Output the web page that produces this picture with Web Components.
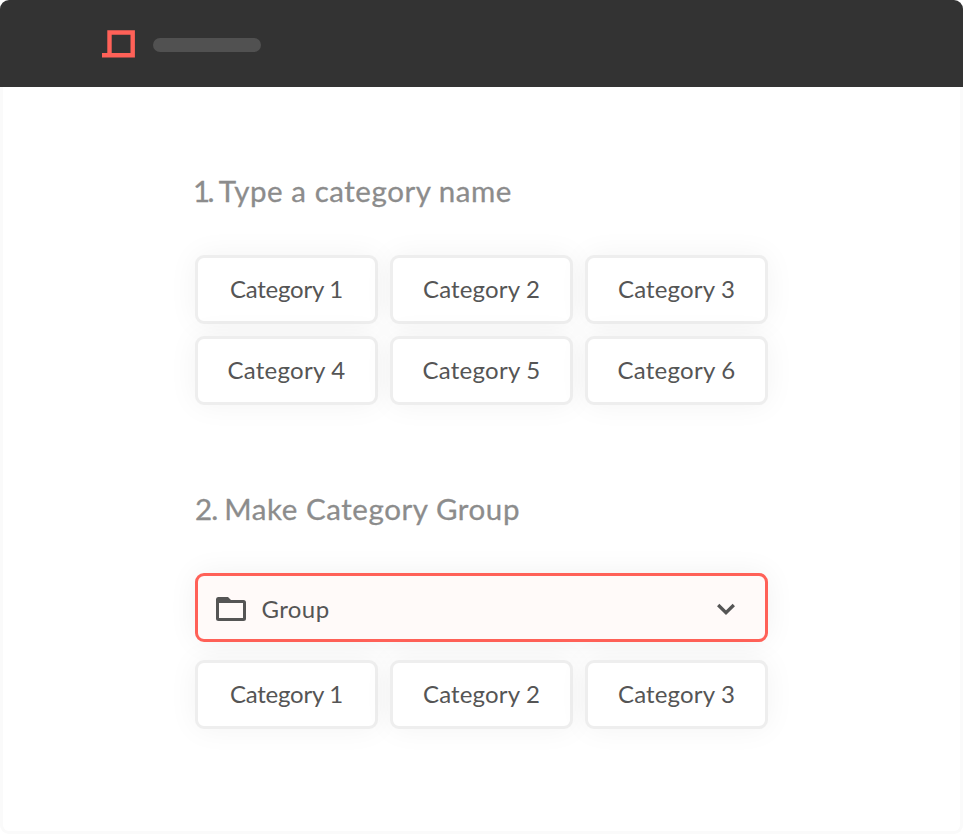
<!DOCTYPE html>
<html lang="en">
<head>
<meta charset="utf-8">
<title>Category groups</title>
<style>
html,body{margin:0;height:100%;background:#fff}
body{font-family:Lato,"Liberation Sans",sans-serif;color:#555}
</style>
</head>
<body>
<category-page></category-page>
<script>
function define(name, html) {
  const t = document.createElement('template');
  t.innerHTML = html;
  customElements.define(name, class extends HTMLElement {
    constructor() {
      super();
      this.attachShadow({mode: 'open'}).append(t.content.cloneNode(true));
    }
  });
}

/* A line of text whose tracking is adjusted to reach the given width. */
customElements.define('tracked-text', class extends HTMLElement {
  constructor() {
    super();
    this.attachShadow({mode: 'open'}).innerHTML =
      '<style>:host{display:block;white-space:pre}span{display:inline-block}</style><span><slot></slot></span>';
  }
  connectedCallback() {
    const span = this.shadowRoot.querySelector('span');
    const lead = this.querySelector('span');
    const n = this.textContent.length - (lead ? lead.textContent.length : 0);
    const gap = (Number(this.getAttribute('width')) - span.getBoundingClientRect().width) / n;
    span.style.letterSpacing = gap.toFixed(3) + 'px';
  }
});

define('app-bar', `
<style>
:host{display:flex;align-items:center;box-sizing:border-box;height:87px;padding:2px 0 0 102px;background:#333;border-radius:9px 9px 0 0}
svg{display:block;width:34px;height:29px;margin-right:17.300px}
i{width:108px;height:14px;border-radius:7px;background:#515151}
</style>
<svg viewBox="0 0 34 29"><path d="M7.500 25.300V2.500h23.200v22.800H0" fill="none" stroke="#ff6158" stroke-width="4.400"/></svg><i></i>`);

define('section-title', `
<style>:host{display:block;height:40px;font-size:29.5px;line-height:37px;color:#8c8c8c;-webkit-text-stroke:.3px #8c8c8c}</style>
<slot></slot>`);

define('category-card', `
<style>
:host{display:flex;align-items:center;justify-content:center;box-sizing:border-box;height:69px;padding-bottom:2px;border:3px solid #eee;border-radius:9px;background:#fff;background-clip:padding-box;font-size:24px;line-height:30px;color:#555}
</style>
<slot></slot>`);

define('card-grid', `
<style>
:host{display:grid;grid-template-columns:repeat(3,183px);gap:12px}
::slotted(*){box-shadow:0 0 30px rgba(0,0,0,.05)}
</style>
<slot></slot>`);

define('group-select', `
<style>
:host{display:flex;align-items:center;box-sizing:border-box;height:69px;padding:1px 27px 0 18px;border:3px solid #ff6158;border-radius:9px;background:#fffaf9;box-shadow:0 0 30px rgba(0,0,0,.06);font-size:24px;line-height:30px;color:#555}
svg{display:block;flex:none}
.label{flex:1;padding-left:15.500px;padding-top:2px}
</style>
<svg width="30" height="25" viewBox="0 -1 30 25"><path d="M2 0h10l3 3h12.500a2.500 2.500 0 0 1 2.500 2.500v16a2.500 2.500 0 0 1-2.500 2.500h-25a2.500 2.500 0 0 1-2.500-2.500v-19a2.500 2.500 0 0 1 2-2.500zM3 6v15h24V6z" fill="#555" fill-rule="evenodd"/></svg>
<div class="label"><slot></slot></div>
<svg width="24" height="24" viewBox="0 0 24 24"><path d="M4.200 9l7.800 7.700 7.800-7.700" fill="none" stroke="#555" stroke-width="3.300"/></svg>`);

define('category-page', `
<style>
:host{display:flex;flex-direction:column;width:963px;height:834px}
main{flex:1;box-sizing:border-box;padding:85px 192px 0;border:3px solid #fafafa;border-top:0;border-radius:0 0 9px 9px}
card-grid.first{margin:43px 0 85px}
group-select{margin:43px 0 18px}
.one{letter-spacing:-2.600px;margin-left:-2px;word-spacing:2px}
.two{letter-spacing:-.8px}
</style>
<app-bar></app-bar>
<main>
<section-title><tracked-text width="317"><span class="one">1. </span>Type a category name</tracked-text></section-title>
<card-grid class="first">
<category-card><tracked-text width="113">Category 1</tracked-text></category-card>
<category-card><tracked-text width="117">Category 2</tracked-text></category-card>
<category-card><tracked-text width="117">Category 3</tracked-text></category-card>
<category-card><tracked-text width="118">Category 4</tracked-text></category-card>
<category-card><tracked-text width="118">Category 5</tracked-text></category-card>
<category-card><tracked-text width="118">Category 6</tracked-text></category-card>
</card-grid>
<section-title><tracked-text width="325"><span class="two">2. </span>Make Category Group</tracked-text></section-title>
<group-select><tracked-text width="68">Group</tracked-text></group-select>
<card-grid>
<category-card><tracked-text width="113">Category 1</tracked-text></category-card>
<category-card><tracked-text width="117">Category 2</tracked-text></category-card>
<category-card><tracked-text width="117">Category 3</tracked-text></category-card>
</card-grid>
</main>`);
</script>
</body>
</html>
